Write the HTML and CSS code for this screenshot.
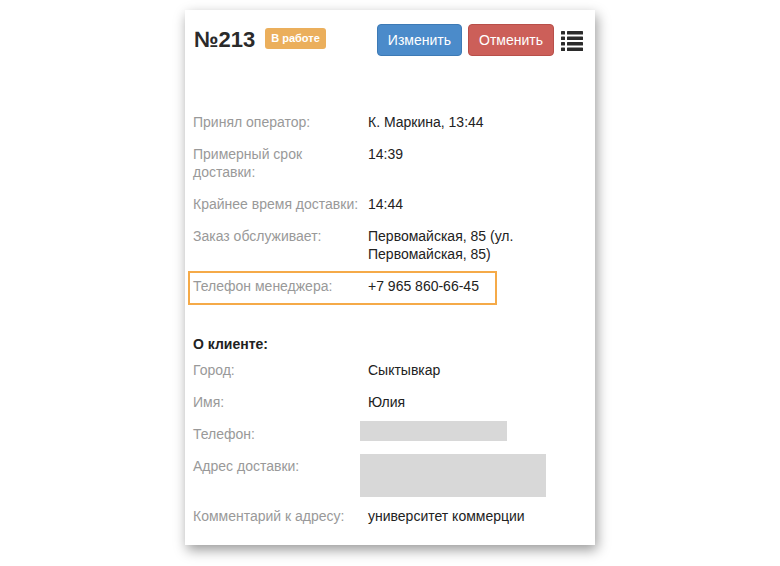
FILE: index.html
```html
<!DOCTYPE html>
<html lang="ru">
<head>
  <meta charset="UTF-8">
  <meta name="viewport" content="width=device-width, initial-scale=1.0">
  <title>Заказ №213</title>
  <link rel="stylesheet" href="styles.css">
</head>
<body>
  <div class="card">
    <header class="card-head">
      <h3 class="order-title">№213</h3>
      <span class="badge">В работе</span>
      <div class="actions">
        <button class="btn btn-edit">Изменить</button>
        <button class="btn btn-cancel">Отменить</button>
        <svg class="icon-list" width="22" height="21" viewBox="0 0 22 21">
          <rect x="0" y="1" width="4" height="3.5" rx="0.6"/>
          <rect x="6" y="1" width="16" height="3.5" rx="0.6"/>
          <rect x="0" y="6.5" width="4" height="3.5" rx="0.6"/>
          <rect x="6" y="6.5" width="16" height="3.5" rx="0.6"/>
          <rect x="0" y="12" width="4" height="3.5" rx="0.6"/>
          <rect x="6" y="12" width="16" height="3.5" rx="0.6"/>
          <rect x="0" y="17.5" width="4" height="3.5" rx="0.6"/>
          <rect x="6" y="17.5" width="16" height="3.5" rx="0.6"/>
        </svg>
      </div>
    </header>

    <div class="info">
      <div class="row">
        <div class="label">Принял оператор:</div>
        <div class="value">К. Маркина, 13:44</div>
      </div>
      <div class="row">
        <div class="label">Примерный срок доставки:</div>
        <div class="value">14:39</div>
      </div>
      <div class="row">
        <div class="label">Крайнее время доставки:</div>
        <div class="value">14:44</div>
      </div>
      <div class="row">
        <div class="label">Заказ обслуживает:</div>
        <div class="value">Первомайская, 85 (ул. Первомайская, 85)</div>
      </div>
      <div class="row row-marked">
        <div class="label">Телефон менеджера:</div>
        <div class="value">+7 965 860-66-45</div>
      </div>
    </div>

    <h4 class="section-title">О клиенте:</h4>
    <div class="info">
      <div class="row">
        <div class="label">Город:</div>
        <div class="value">Сыктывкар</div>
      </div>
      <div class="row">
        <div class="label">Имя:</div>
        <div class="value">Юлия</div>
      </div>
      <div class="row">
        <div class="label">Телефон:</div>
        <div class="value"><span class="hidden-data hidden-phone"></span></div>
      </div>
      <div class="row">
        <div class="label">Адрес доставки:</div>
        <div class="value"><span class="hidden-data hidden-address"></span></div>
      </div>
      <div class="row">
        <div class="label">Комментарий к адресу:</div>
        <div class="value">университет коммерции</div>
      </div>
    </div>
  </div>
</body>
</html>
```

FILE: styles.css
```css
* {
  box-sizing: border-box;
}

body {
  margin: 0;
  padding: 10px 0 21px;
  background: #fff;
  font-family: "Liberation Sans", Arial, sans-serif;
  font-size: 14px;
  line-height: 18px;
  color: #222;
}

.card {
  width: 410px;
  margin: 0 auto;
  padding: 14px 12px 11px 8px;
  background: #fff;
  box-shadow: 2px 5px 12px rgba(0, 0, 0, .4);
}

.card-head {
  display: flex;
  align-items: center;
  margin-bottom: 52px;
}

.order-title {
  margin: 0 10px 0 1px;
  font-size: 22px;
  line-height: 28px;
  font-weight: bold;
  color: #2a2a2a;
}

.badge {
  padding: 4px 6px;
  border-radius: 3px;
  background: #ebaf5c;
  color: #fff;
  font-size: 11px;
  line-height: 13px;
  font-weight: bold;
  margin-top: -4px;
}

.actions {
  margin-left: auto;
  display: flex;
  align-items: center;
  gap: 6px;
}

.btn {
  padding: 6px 10px;
  border: 1px solid;
  border-radius: 4px;
  font-family: inherit;
  font-size: 14px;
  line-height: 18px;
  color: #fff;
}

.btn-edit {
  background: #4b8bca;
  border-color: #3d7ab5;
}

.btn-cancel {
  background: #cc5f59;
  border-color: #b84f49;
}

.icon-list {
  margin-left: 1px;
  fill: #2b2b2b;
}

.row {
  display: grid;
  grid-template-columns: 175px 1fr;
  margin-left: -4px;
  padding: 4px 0 8px 3px;
  border: 1px solid transparent;
}

.row-marked {
  width: 309px;
  margin: -1px 0 -1px -5px;
  border: 2px solid #f5aa48;
}

.label {
  color: #999;
}

.section-title {
  margin: 31px 0 3px;
  font-size: 14px;
  line-height: 18px;
  font-weight: bold;
  color: #222;
}

.hidden-data {
  display: block;
  margin-left: -8px;
  background: #d8d8d8;
}

.hidden-phone {
  width: 147px;
  height: 20px;
  margin-top: -4px;
  margin-bottom: 2px;
}

.hidden-address {
  width: 186px;
  height: 43px;
  margin-top: -3px;
  margin-bottom: -4px;
}
```
